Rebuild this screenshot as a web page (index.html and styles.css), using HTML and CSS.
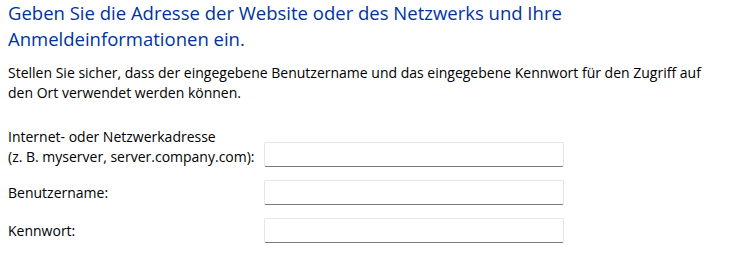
FILE: index.html
```html
<!DOCTYPE html>
<html lang="de">
<head>
<meta charset="utf-8">
<link rel="stylesheet" href="styles.css">
</head>
<body>
<main class="dialog">
  <h1 class="instruction">Geben Sie die Adresse der Website oder des Netzwerks und Ihre<br>Anmeldeinformationen ein.</h1>
  <p class="info">Stellen Sie sicher, dass der eingegebene Benutzername und das eingegebene Kennwort für den Zugriff auf<br>den Ort verwendet werden können.</p>
  <form class="fields">
    <div class="row row-top">
      <label class="label" for="addr">Internet- oder Netzwerkadresse<br>(z. B. myserver, server.company.com):</label>
      <input class="field" id="addr" type="text">
    </div>
    <div class="row">
      <label class="label" for="user">Benutzername:</label>
      <input class="field" id="user" type="text">
    </div>
    <div class="row">
      <label class="label" for="pass">Kennwort:</label>
      <input class="field" id="pass" type="password">
    </div>
  </form>
</main>
</body>
</html>
```
FILE: styles.css
```css
html, body {
  margin: 0;
  padding: 0;
  background: #ffffff;
}
body {
  font-family: "Open Sans", "Noto Sans", sans-serif;
  color: #000000;
}
.dialog {
  padding: 0 8px;
}
.instruction {
  margin: 0;
  font-weight: 400;
  font-size: 18.5px;
  line-height: 26px;
  color: #0033a0;
}
.info {
  margin: 11px 0 0 0;
  font-size: 14px;
  line-height: 20px;
}
.fields {
  margin-top: 24px;
  display: flex;
  flex-direction: column;
  gap: 13px;
}
.row {
  display: flex;
  align-items: center;
}
.row-top {
  align-items: flex-end;
}
.label {
  width: 256px;
  font-size: 14px;
  line-height: 20px;
}
.field {
  box-sizing: border-box;
  width: 300px;
  height: 25px;
  margin: 0;
  padding: 0 6px;
  border: 1px solid #e6e6e6;
  border-bottom: 1px solid #7a7a7a;
  border-radius: 2px;
  background: #ffffff;
  outline: none;
}
```
